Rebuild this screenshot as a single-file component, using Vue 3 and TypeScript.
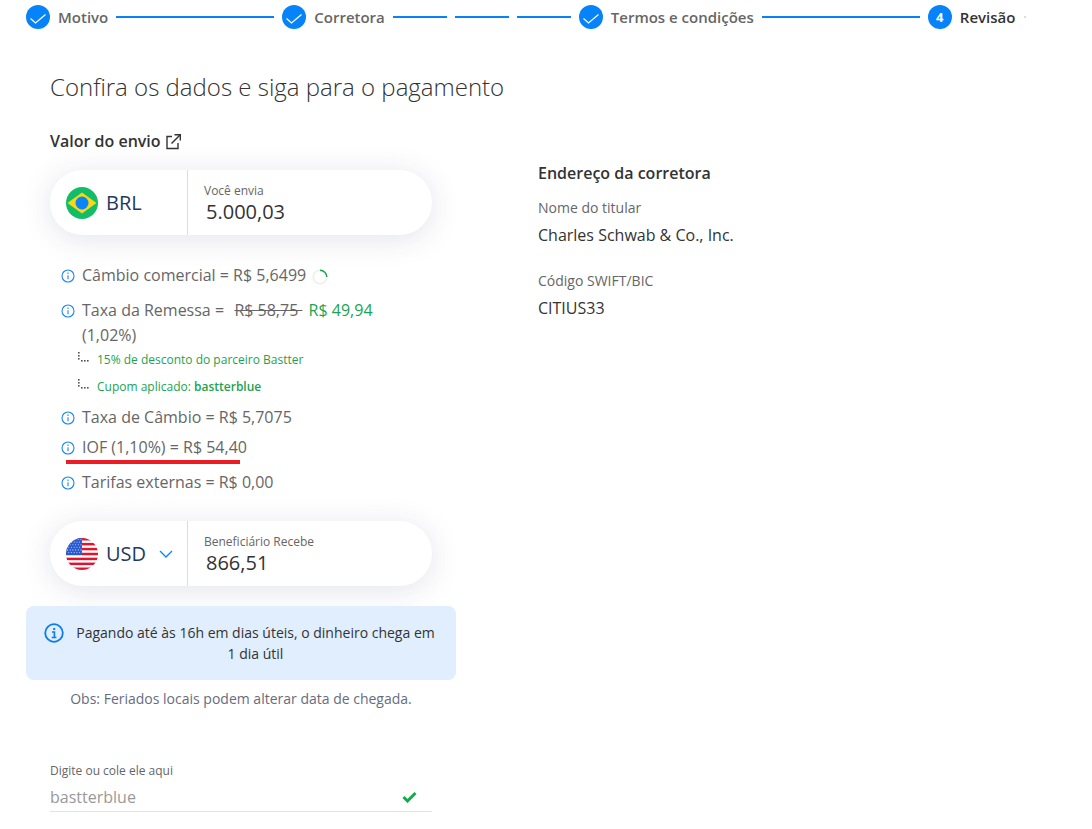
<script setup lang="ts">
interface Step { label: string; done: boolean; num?: number; lines: number[] }
const steps: Step[] = [
  { label: 'Motivo', done: true, lines: [158] },
  { label: 'Corretora', done: true, lines: [54, 54, 54] },
  { label: 'Termos e condições', done: true, lines: [158] },
  { label: 'Revisão', done: false, num: 4, lines: [] }
]
const stripes = [0, 1, 2, 3, 4, 5, 6]
const stars: { x: number; y: number }[] = []
for (let r = 0; r < 6; r++) {
  for (let c = 0; c < 6; c++) {
    stars.push({ x: 1.5 + c * 2.7 + (r % 2 ? 1.3 : 0), y: 1.5 + r * 2.6 })
  }
}
</script>

<template>
  <div class="page">
    <nav class="stepper">
      <template v-for="s in steps" :key="s.label">
        <span class="circle">
          <svg v-if="s.done" class="tick" width="16" height="10" viewBox="0 0 16 10"><path d="M0.5 4.5 L5.5 9 L15.5 0.5" fill="none" stroke="#fff" stroke-width="1.2" /></svg>
          <b v-else>{{ s.num }}</b>
        </span>
        <span class="step-label" :class="{ current: !s.done }">{{ s.label }}</span>
        <span v-if="s.lines.length" class="lines">
          <i v-for="(w, i) in s.lines" :key="i" :style="{ width: w + 'px' }"></i>
        </span>
      </template>
      <span class="end-dot"></span>
    </nav>

    <main class="main">
      <h1>Confira os dados e siga para o pagamento</h1>
      <div class="columns">
        <section class="left">
          <h2 class="send-title">
            Valor do envio
            <svg width="17" height="17" viewBox="0 0 17 17" fill="none" stroke="#333" stroke-width="1.4"><path d="M7 3.5H2V15.5H13V10" /><path d="M6.5 10.5 L15 2" /><path d="M9.5 1.7H15.3V7.5" /></svg>
          </h2>

          <div class="card">
            <div class="cur">
              <svg class="flag" width="32" height="32" viewBox="0 0 32 32">
                <circle cx="16" cy="16" r="16" fill="#12bd68" />
                <path d="M1.5 16 L16 5.5 L30.5 16 L16 26.5Z" fill="#f9d616" />
                <circle cx="16" cy="16" r="6.5" fill="#0b84f5" />
              </svg>
              <span class="code">BRL</span>
            </div>
            <div class="amount">
              <label>Você envia</label>
              <strong>5.000,03</strong>
            </div>
          </div>

          <ul class="rows">
            <li class="row r1">
              <svg class="info" viewBox="0 0 14 14"><circle cx="7" cy="7" r="6" /><path d="M7 6.2V10.2M7 3.6V5" /></svg>
              <span>Câmbio comercial = R$ 5,6499</span>
              <svg class="spin" width="16" height="16" viewBox="0 0 16 16" fill="none"><circle cx="8" cy="8" r="6.8" stroke="#eee" stroke-width="1.5" /><path d="M8 1.2 A6.8 6.8 0 0 1 14.8 8" stroke="#1ba34f" stroke-width="1.5" /></svg>
            </li>
            <li class="row r2">
              <svg class="info" viewBox="0 0 14 14"><circle cx="7" cy="7" r="6" /><path d="M7 6.2V10.2M7 3.6V5" /></svg>
              <span class="wrap">Taxa da Remessa = &nbsp;<s>R$ 58,75&nbsp;</s>&nbsp;<em>R$ 49,94</em> (1,02%)</span>
            </li>
            <li class="sub s1">
              <svg width="13" height="12" viewBox="0 0 13 12" fill="#555"><rect x="0" y="0" width="1.6" height="1.6" /><rect x="0" y="3" width="1.6" height="1.6" /><rect x="0" y="6" width="1.6" height="1.6" /><rect x="3" y="8" width="1.6" height="1.6" /><rect x="6" y="8" width="1.6" height="1.6" /><rect x="9" y="8" width="1.6" height="1.6" /></svg>
              <span>15% de desconto do parceiro Bastter</span>
            </li>
            <li class="sub s2">
              <svg width="13" height="12" viewBox="0 0 13 12" fill="#555"><rect x="0" y="0" width="1.6" height="1.6" /><rect x="0" y="3" width="1.6" height="1.6" /><rect x="0" y="6" width="1.6" height="1.6" /><rect x="3" y="8" width="1.6" height="1.6" /><rect x="6" y="8" width="1.6" height="1.6" /><rect x="9" y="8" width="1.6" height="1.6" /></svg>
              <span>Cupom aplicado: <b>bastterblue</b></span>
            </li>
            <li class="row r3">
              <svg class="info" viewBox="0 0 14 14"><circle cx="7" cy="7" r="6" /><path d="M7 6.2V10.2M7 3.6V5" /></svg>
              <span>Taxa de Câmbio = R$ 5,7075</span>
            </li>
            <li class="row r4">
              <svg class="info" viewBox="0 0 14 14"><circle cx="7" cy="7" r="6" /><path d="M7 6.2V10.2M7 3.6V5" /></svg>
              <span>IOF (1,10%) = R$ 54,40</span>
              <i class="red-mark"></i>
            </li>
            <li class="row r5">
              <svg class="info" viewBox="0 0 14 14"><circle cx="7" cy="7" r="6" /><path d="M7 6.2V10.2M7 3.6V5" /></svg>
              <span>Tarifas externas = R$ 0,00</span>
            </li>
          </ul>

          <div class="card card-usd">
            <div class="cur">
              <svg class="flag" width="32" height="32" viewBox="0 0 32 32">
                <defs><clipPath id="usclip"><circle cx="16" cy="16" r="16" /></clipPath></defs>
                <g clip-path="url(#usclip)">
                  <rect width="32" height="32" fill="#fff" />
                  <rect v-for="n in stripes" :key="n" x="0" :y="n * 4.92" width="32" height="2.46" fill="#e8112d" />
                  <rect width="16" height="17" fill="#2a5bd0" />
                  <circle v-for="(p, i) in stars" :key="i" :cx="p.x" :cy="p.y" r="0.55" fill="#c4d4f4" />
                </g>
              </svg>
              <span class="code">USD</span>
              <svg class="chev" width="14" height="8" viewBox="0 0 14 8" fill="none"><path d="M1 1 L7 7 L13 1" stroke="#0b84f5" stroke-width="1.3" /></svg>
            </div>
            <div class="amount">
              <label>Beneficiário Recebe</label>
              <strong>866,51</strong>
            </div>
          </div>

          <div class="notice">
            <svg width="20" height="20" viewBox="0 0 20 20" fill="none" stroke="#0b7cf0"><circle cx="10" cy="10" r="8.8" stroke-width="1.8" /><path d="M8 9H10.4V14.2M7.8 14.5H12.4" stroke-width="1.7" /><path d="M10.2 5V7" stroke-width="2" /></svg>
            <p>Pagando até às 16h em dias úteis, o dinheiro chega em 1 dia útil</p>
          </div>
          <p class="obs">Obs: Feriados locais podem alterar data de chegada.</p>

          <div class="coupon">
            <label>Digite ou cole ele aqui</label>
            <div class="coupon-input">
              <span>bastterblue</span>
              <svg width="15" height="12" viewBox="0 0 15 12" fill="none"><path d="M1.5 6 L5.5 10 L13.5 2" stroke="#12ad4b" stroke-width="3" /></svg>
            </div>
          </div>
        </section>

        <aside class="right">
          <h2>Endereço da corretora</h2>
          <div class="field">
            <label>Nome do titular</label>
            <span>Charles Schwab &amp; Co., Inc.</span>
          </div>
          <div class="field">
            <label>Código SWIFT/BIC</label>
            <span>CITIUS33</span>
          </div>
        </aside>
      </div>
    </main>
  </div>
</template>

<style>
html, body { margin: 0; background: #fff; }
</style>

<style scoped>
.page {
  width: 1092px;
  height: 829px;
  overflow: hidden;
  font-family: "Open Sans", "Liberation Sans", sans-serif;
  color: #333;
}
.stepper {
  display: flex;
  align-items: center;
  height: 34px;
  padding-left: 26px;
}
.circle {
  width: 24px;
  height: 24px;
  border-radius: 50%;
  background: #0683f9;
  display: flex;
  align-items: center;
  justify-content: center;
  color: #fff;
  font-size: 13px;
  flex: none;
}
.tick { margin-top: 4px; }
.step-label {
  margin-left: 8px;
  font-size: 15px;
  font-weight: 600;
  color: #666;
  white-space: nowrap;
}
.step-label.current { color: #333; }
.lines {
  display: flex;
  gap: 8px;
  margin: 0 8px;
}
.lines i {
  display: block;
  height: 2px;
  background: #0683f9;
}
.end-dot {
  width: 2px;
  height: 2px;
  background: #ddd;
  margin-left: 9px;
}
.main { padding-left: 50px; }
h1 {
  margin: 34px 0 0;
  font-size: 24px;
  line-height: 38px;
  font-weight: 300;
  color: #333;
}
.columns { display: flex; margin-top: 24px; }
.left { width: 382px; flex: none; }
.send-title {
  display: flex;
  align-items: center;
  gap: 4px;
  margin: 0;
  height: 22px;
  font-size: 16px;
  font-weight: 600;
  color: #333;
}
.card {
  display: flex;
  height: 65px;
  margin-top: 18px;
  border-radius: 33px;
  background: #fff;
  box-shadow: 0 4px 30px rgba(40, 50, 90, 0.13);
}
.cur {
  width: 138px;
  flex: none;
  box-sizing: border-box;
  display: flex;
  align-items: center;
  padding-left: 16px;
  border-right: 1px solid #ddd;
}
.code {
  margin-left: 8px;
  font-size: 20px;
  color: #1f3a5f;
}
.chev { margin-left: 13px; }
.amount {
  display: flex;
  flex-direction: column;
  padding: 13px 0 0 16px;
}
.amount label {
  font-size: 12px;
  line-height: 16px;
  color: #666;
}
.amount strong {
  margin-left: 2px;
  font-size: 20px;
  line-height: 26px;
  font-weight: 400;
  color: #333;
}
.rows {
  list-style: none;
  margin: 0;
  padding: 0 0 0 11px;
  position: relative;
  width: 320px;
}
.row {
  display: flex;
  align-items: flex-start;
  position: relative;
  font-size: 16px;
  line-height: 24px;
  color: #666;
}
.info {
  width: 14px;
  height: 14px;
  flex: none;
  margin: 6px 7px 0 0;
  fill: none;
  stroke: #1c86ee;
  stroke-width: 1.1;
}
.spin { margin: 6px 0 0 6px; flex: none; }
.r1 { margin-top: 28px; }
.r2 { margin-top: 11px; }
.r2 .wrap { width: 300px; line-height: 25px; }
.r2 s { color: #666; margin-left: 2px; }
.r2 em { font-style: normal; color: #1ba34f; margin-left: 2px; }
.sub {
  display: flex;
  align-items: center;
  font-size: 12px;
  line-height: 16px;
  color: #1ba34f;
  padding-left: 17px;
}
.sub svg { margin: -4px 6px 0 0; flex: none; }
.sub b { font-weight: 600; }
.s1 { margin-top: 4px; }
.s2 { margin-top: 11px; }
.r3 { margin-top: 10px; }
.r4 { margin-top: 6px; }
.r5 { margin-top: 11px; }
.red-mark {
  position: absolute;
  left: 5px;
  top: 25px;
  width: 174px;
  height: 3.5px;
  background: #ed1c24;
}
.card-usd { margin-top: 27px; }
.notice {
  display: flex;
  align-items: flex-start;
  box-sizing: border-box;
  width: 430px;
  height: 74px;
  margin: 20px 0 0 -24px;
  padding: 16px 20px 0 18px;
  background: #e0eefd;
  border-radius: 8px;
}
.notice svg { flex: none; margin-top: 1px; }
.notice p {
  margin: 0 0 0 11px;
  font-size: 14px;
  line-height: 21px;
  text-align: center;
  color: #333;
}
.obs {
  width: 430px;
  margin: 9px 0 0 -24px;
  font-size: 14px;
  line-height: 20px;
  text-align: center;
  color: #666c80;
}
.coupon { margin-top: 54px; }
.coupon label {
  display: block;
  font-size: 12px;
  line-height: 16px;
  color: #666;
}
.coupon-input {
  display: flex;
  align-items: center;
  justify-content: space-between;
  box-sizing: border-box;
  height: 33px;
  padding: 4px 15px 0 0;
  border-bottom: 1px solid #e4e4e4;
  font-size: 16px;
  color: #999;
}
.right { margin: 31px 0 0 106px; }
.right h2 {
  margin: 0;
  font-size: 16px;
  line-height: 24px;
  font-weight: 600;
  color: #333;
}
.field {
  display: flex;
  flex-direction: column;
  margin-top: 13px;
}
.field + .field { margin-top: 24px; }
.field label {
  font-size: 14px;
  line-height: 20px;
  color: #666;
}
.field span {
  margin-top: 5px;
  font-size: 16px;
  line-height: 24px;
  color: #333;
}
</style>
